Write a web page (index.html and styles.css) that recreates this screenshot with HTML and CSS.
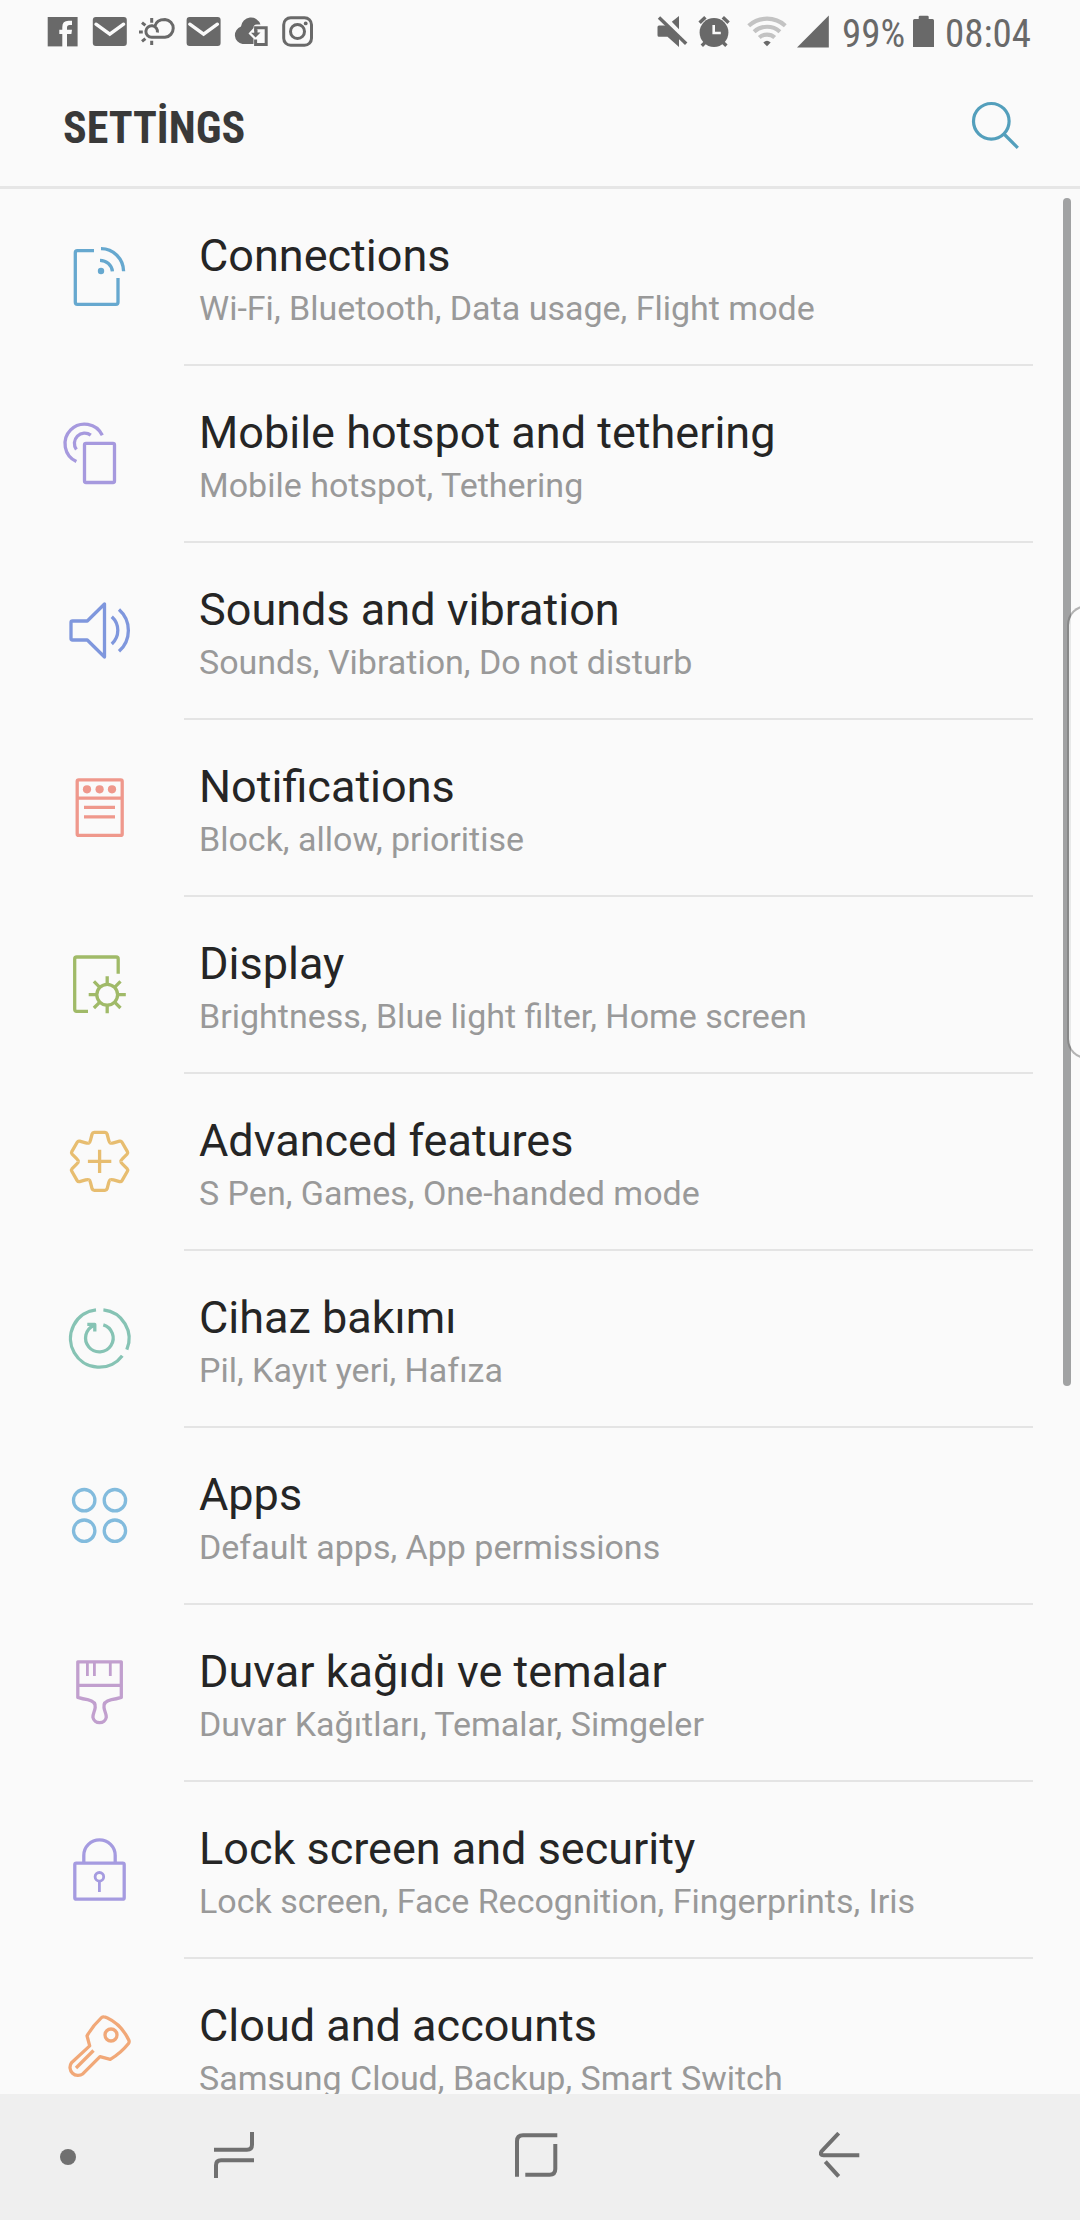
FILE: index.html
```html
<!DOCTYPE html>
<html lang="en">
<head>
<meta charset="utf-8">
<title>Settings</title>
<link rel="stylesheet" href="styles.css">
</head>
<body>
<div class="screen">
  <div class="status">
    <div class="status-group">
      <svg width="44" height="62" viewBox="40 0 44 62"><path d="M47.7 17H77.6V46.4H47.7z"/><path class="cut" d="M62.3 47V34H59.3V29.8H62.3V27Q62.3 20.7 68.5 20.7H72V25H69.5Q67 25 67 27.5V29.8H72L71.4 34H67V47z"/></svg>
      <svg width="48" height="62" viewBox="84 0 48 62"><rect x="92.8" y="17" width="34" height="29" rx="3"/><path class="cut-line" d="M96 24.2L109.8 34.2L123.6 24.2"/></svg>
      <svg width="48" height="62" viewBox="132 0 48 62"><g class="line"><path d="M157.4 32.5A5.8 5.8 0 1 0 151.7 37.3H165A9.2 9 0 0 0 165 19.4Q156.5 19.4 155 26"/><path d="M139 32H142.8M151.7 18V22.7M151.7 40.7V45M142 22.6L145.4 25.4M142 41.4L145.4 38.6"/></g></svg>
      <svg width="48" height="62" viewBox="180 0 48 62"><rect x="186.6" y="17" width="34" height="29" rx="3"/><path class="cut-line" d="M189.8 24.2L203.6 34.2L217.4 24.2"/></svg>
      <svg width="48" height="62" viewBox="228 0 48 62"><path d="M242.5 44A9 9 0 0 1 241 26.6A10 10 0 0 1 260.5 24.5H257Q253.5 24.5 253.5 28L248.5 33.5L253.5 38.5V44z"/><path class="line" d="M255.6 31V27.7H266.2V44.5H255.6V39.5"/><path d="M250.5 33.3L256.5 29.5V38z" class="cut"/><path d="M260.5 32.5L255.6 37.5L251 32.7H254.2V29.5H257.5V32.5z"/></svg>
      <svg width="48" height="62" viewBox="276 0 48 62"><g class="line"><rect x="283.7" y="17.7" width="27.8" height="27.6" rx="7"/><circle cx="297.5" cy="31.5" r="7"/></g><circle cx="305.7" cy="23.4" r="1.9"/></svg>
    </div>
    <div class="status-group status-right">
      <svg width="44" height="62" viewBox="650 0 44 62"><path d="M657.5 27Q657.5 25.5 659 25.5H668L679 36.5V47L667.5 36.8H659Q657.5 36.8 657.5 35.3zM671.8 21.8L679 16V29.2z"/><path class="line slash" d="M659 17.5L686.2 43.8"/></svg>
      <svg width="42" height="62" viewBox="694 0 42 62"><circle cx="714" cy="32.5" r="14.4"/><path class="line bells" d="M699.6 22.8L705.4 17.2M722.8 17.2L728.6 22.8M701.8 45.8L706 41.6M726.4 45.8L722 41.6"/><path class="cut-hands" d="M713.7 25V33H720.8"/></svg>
      <svg width="56" height="62" viewBox="736 0 56 62"><path class="wifi" d="M748.7 25.7A27.3 27.3 0 0 1 785.3 25.7M754.1 31.7A19.3 19.3 0 0 1 779.9 31.7M759.3 37.5A11.5 11.5 0 0 1 774.7 37.5"/><path d="M767 46.3L763.3 42.5Q767 38.8 770.7 42.5z"/></svg>
      <svg width="42" height="62" viewBox="792 0 42 62"><path d="M797 47.4L828.8 15.6V47.4z"/></svg>
      <span class="battery-level"><span class="condensed">99%</span></span>
      <svg width="30" height="62" viewBox="908 0 30 62"><path d="M914.5 19H918.7V17Q918.7 15.7 920 15.7H927.4Q928.7 15.7 928.7 17V19H932.5Q934 19 934 20.5V47H913V20.5Q913 19 914.5 19z"/></svg>
      <span class="clock"><span class="condensed">08:04</span></span>
    </div>
  </div>
  <header class="header">
    <h1 class="condensed">SETTİNGS</h1>
    <svg width="52" height="52" viewBox="968 98 52 52"><circle cx="991.3" cy="121.3" r="17.8"/><path d="M1004 134L1017.8 147.8"/></svg>
  </header>
  <main class="list">
    <section class="row">
      <svg class="icon blue" viewBox="50 38 100 100"><path d="M94 61.7H77.3Q75.3 61.7 75.3 63.7V113Q75.3 115.3 77.3 115.3H116Q118 115.3 118 113.3V89M100 71.3A12.5 12 0 0 1 112.4 82.3M101 59.7A22.5 23 0 0 1 123.6 82.3"/><circle class="solid" cx="101" cy="82" r="3.2"/></svg>
      <div class="text"><h2>Connections</h2><p>Wi-Fi, Bluetooth, Data usage, Flight mode</p></div>
    </section>
    <section class="row">
      <svg class="icon violet" viewBox="50 38 100 100"><rect x="84.5" y="77.3" width="30" height="39.2" rx="1.5"/><path d="M102.3 69.3A19.6 19.6 0 1 0 76.4 95.5M90.8 69.1A10.3 10.3 0 0 0 76.4 83.5"/></svg>
      <div class="text"><h2>Mobile hotspot and tethering</h2><p>Mobile hotspot, Tethering</p></div>
    </section>
    <section class="row">
      <svg class="icon indigo" viewBox="50 38 100 100"><path d="M72.5 78H87.3L104.5 61V114L87.3 97H72.5Q71 97 71 95.5V79.5Q71 78 72.5 78zM111.8 73.7A18.5 18.5 0 0 1 111.8 101M119 66.5A28 28 0 0 1 119 108.3"/></svg>
      <div class="text"><h2>Sounds and vibration</h2><p>Sounds, Vibration, Do not disturb</p></div>
    </section>
    <section class="row">
      <svg class="icon coral" viewBox="50 38 100 100"><rect x="77.2" y="59.8" width="45" height="55.6" rx="1.5"/><path d="M77 78.2H122M84 87.4H115M84 96.8H115"/><g class="solid"><circle cx="87" cy="69.3" r="4.1"/><circle cx="99.6" cy="69.3" r="4.1"/><circle cx="112" cy="69.3" r="4.1"/></g></svg>
      <div class="text"><h2>Notifications</h2><p>Block, allow, prioritise</p></div>
    </section>
    <section class="row">
      <svg class="icon green" viewBox="50 38 100 100"><path d="M88 114.3H76.7Q74.7 114.3 74.7 112.3V62Q74.7 60 76.7 60H116.2Q118.2 60 118.2 62V76.7"/><circle cx="107.2" cy="97.7" r="10.4"/><path d="M107.2 79.2V87.3M107.2 108V116.3M88.7 97.7H96.8M117.6 97.7H125.8M93.9 84.4L99.8 90.3M120.5 84.4L114.6 90.3M93.9 111L99.8 105.1M120.5 111L114.6 105.1"/></svg>
      <div class="text"><h2>Display</h2><p>Brightness, Blue light filter, Home screen</p></div>
    </section>
    <section class="row">
      <svg class="icon amber" viewBox="50 38 100 100"><defs><path id="tooth" d="M-10.65 -18.45Q-9.7 -18.9 -9.1 -21.3L-7.5 -27.4Q-7 -29 -5.4 -29H5.4Q7 -29 7.5 -27.4L9.1 -21.3Q9.7 -18.9 10.65 -18.45"/></defs><g transform="translate(99.6 87.4)"><use href="#tooth"/><use href="#tooth" transform="rotate(60)"/><use href="#tooth" transform="rotate(120)"/><use href="#tooth" transform="rotate(180)"/><use href="#tooth" transform="rotate(240)"/><use href="#tooth" transform="rotate(300)"/><path d="M-11.7 0H11.7M0 -11.7V11.7"/></g></svg>
      <div class="text"><h2>Advanced features</h2><p>S Pen, Games, One-handed mode</p></div>
    </section>
    <section class="row">
      <svg class="icon teal" viewBox="50 38 100 100"><path d="M103.4 58.8A28.8 28.8 0 0 1 126.8 98.6M122.3 104.7A28.8 28.8 0 1 1 96 58.8M103.3 73.8A13.8 13.8 0 1 1 93.8 74.4"/><path d="M87.3 73.4H94.8V80.6"/></svg>
      <div class="text"><h2>Cihaz bakımı</h2><p>Pil, Kayıt yeri, Hafıza</p></div>
    </section>
    <section class="row">
      <svg class="icon sky" viewBox="50 38 100 100"><circle cx="84.2" cy="72.2" r="10.7"/><circle cx="114.9" cy="72.2" r="10.7"/><circle cx="84.2" cy="102.7" r="10.7"/><circle cx="114.9" cy="102.7" r="10.7"/></svg>
      <div class="text"><h2>Apps</h2><p>Default apps, App permissions</p></div>
    </section>
    <section class="row">
      <svg class="icon mauve" viewBox="50 38 100 100"><path d="M77.8 56.8H121.3V92.4Q116 94 111.5 94.7C105.5 96 103.3 98.5 104 102.5C104.5 106.5 106.5 109 106.3 112.3A6.8 6.5 0 0 1 92.9 112.3C92.7 109 94.7 106.5 95.2 102.5C95.8 98.5 93.5 96 87.6 94.7Q83 94 77.8 92.4zM77.8 80.4H121.3"/><path class="thin" d="M87.4 57V71M94.4 57V71M110.3 57V71"/></svg>
      <div class="text"><h2>Duvar kağıdı ve temalar</h2><p>Duvar Kağıtları, Temalar, Simgeler</p></div>
    </section>
    <section class="row">
      <svg class="icon purple" viewBox="50 38 100 100"><rect x="74.8" y="81.2" width="49.4" height="36" rx="1.5"/><path d="M83.8 81V73.5A15.7 15.7 0 0 1 115.2 73.5V81"/><g class="thin"><circle cx="99.4" cy="94.8" r="4.3"/><path d="M99.4 99V110"/></g></svg>
      <div class="text"><h2>Lock screen and security</h2><p>Lock screen, Face Recognition, Fingerprints, Iris</p></div>
    </section>
    <section class="row">
      <svg class="icon orange" viewBox="50 38 100 100"><path d="M104 57.8Q105 57.8 107 58.8Q121.5 65.5 129 81.5Q129.5 83 128.5 84.5Q121 94 110.3 100.3L100 97.7L83 114.7A8 8 0 0 1 71.5 103.8L89.7 86.9L87 76.8Q93 66.5 101.5 58.6Q102.5 57.7 104 57.8z"/><circle cx="111" cy="76" r="6"/><path d="M93.5 91.5L76 109"/></svg>
      <div class="text"><h2>Cloud and accounts</h2><p>Samsung Cloud, Backup, Smart Switch</p></div>
    </section>
  </main>
  <nav class="nav">
    <svg width="16" height="16" viewBox="0 0 16 16"><circle class="dot" cx="8" cy="8" r="8"/></svg>
    <svg width="40" height="46" viewBox="214 2132 40 46"><path d="M214 2149.7H247Q252 2149.7 252 2144.7V2132M254 2160.3H221Q216 2160.3 216 2165.3V2178"/></svg>
    <svg width="44" height="46" viewBox="515 2132 44 46"><path d="M557.3 2135.3H523Q517 2135.3 517 2141.3V2176.7M555.3 2144V2169Q555.3 2174.7 549.6 2174.7H525.3"/></svg>
    <svg width="42" height="46" viewBox="819 2132 42 46"><path d="M838.7 2133.2L821.5 2151.5Q819.5 2155.2 823.5 2155.2H859.3M825.3 2161.6L838.7 2176.4"/></svg>
  </nav>
  <div class="scrollbar"></div>
  <div class="edge-handle"></div>
</div>
</body>
</html>
```
FILE: styles.css
```css
* { box-sizing: border-box; margin: 0; padding: 0; }

body {
  background: #fafafa;
  font-family: Roboto, "Noto Sans", sans-serif;
  overflow: hidden;
}

.screen {
  position: relative;
  display: flex;
  flex-direction: column;
  width: 1080px;
  height: 2220px;
  overflow: hidden;
}

svg { display: block; flex: none; fill: none; }

.condensed {
  display: block;
  font-family: "Roboto Condensed", Roboto, sans-serif;
  font-stretch: 75%;
  white-space: nowrap;
}

.status {
  display: flex;
  justify-content: space-between;
  height: 62px;
  padding: 0 46px 0 40px;
  color: #696969;
}
.status-group { display: flex; }
.status-right { width: 384px; }
.status svg { fill: #696969; }
.status .cut { fill: #fafafa; }
.status .cut-line { fill: none; stroke: #fafafa; stroke-width: 3.4; stroke-linecap: round; }
.status .cut-hands { fill: none; stroke: #fafafa; stroke-width: 2.6; }
.status .line { fill: none; stroke: #696969; stroke-width: 3; }
.status .bells { stroke-width: 3.4; }
.status .slash { stroke-width: 3.4; }
.status .wifi { fill: none; stroke: #c3c3c3; stroke-width: 4.2; }
.status span { font-size: 39px; line-height: 68px; }
.battery-level { width: 74px; padding-left: 8px; }
.clock { width: 96px; padding-left: 7px; }

.header {
  display: flex;
  justify-content: space-between;
  align-items: flex-start;
  height: 127px;
  padding: 36px 60px 0 63px;
  border-bottom: 3px solid #e6e6e6;
}
.header h1 { font-size: 44px; line-height: 60px; font-weight: 700; color: #393939; }
.header svg { stroke: #539fbc; stroke-width: 3.2; }

.list { flex: none; height: 1905px; overflow: hidden; }
.row { display: flex; height: 177px; padding: 0 47px 0 50px; }
.icon { width: 100px; height: 100px; margin: 38px 34px 0 0; stroke: currentColor; stroke-width: 3.3; stroke-linejoin: round; }
.icon .solid { fill: currentColor; stroke: none; }
.icon .thin { stroke-width: 2.8; }
.text { flex: 1; padding: 39px 0 0 15px; border-bottom: 2px solid #e4e4e4; white-space: nowrap; }
.text h2 { font-size: 45px; line-height: 56px; font-weight: 400; color: #252525; }
.text p { font-size: 34px; line-height: 48px; color: #999; }

.blue { color: #66a8cf; }
.violet { color: #a699de; }
.indigo { color: #7f97dd; }
.coral { color: #ef988c; }
.green { color: #a0ba68; }
.amber { color: #e7bd70; }
.teal { color: #86c3b4; }
.sky { color: #82bbdd; }
.mauve { color: #c19fce; }
.purple { color: #a59be0; }
.orange { color: #f1a878; }

.nav {
  display: grid;
  grid-template-columns: 154px 301px 304px 1fr;
  align-items: center;
  height: 126px;
  padding: 0 0 4px 60px;
  background: #efefef;
}
.nav svg { stroke: #707070; stroke-width: 4; }
.nav .dot { fill: #707070; stroke: none; }
.nav svg:first-child { margin-top: 4px; }

.scrollbar {
  position: absolute;
  left: 1063px;
  top: 198px;
  width: 8px;
  height: 1188px;
  border-radius: 4px;
  background: #a1a2a3;
}
.edge-handle {
  position: absolute;
  left: 1067px;
  top: 605px;
  width: 40px;
  height: 454px;
  border: 2px solid rgba(110, 110, 110, .5);
  border-radius: 20px;
  background: rgba(252, 252, 252, .78);
  background-clip: padding-box;
}
```
